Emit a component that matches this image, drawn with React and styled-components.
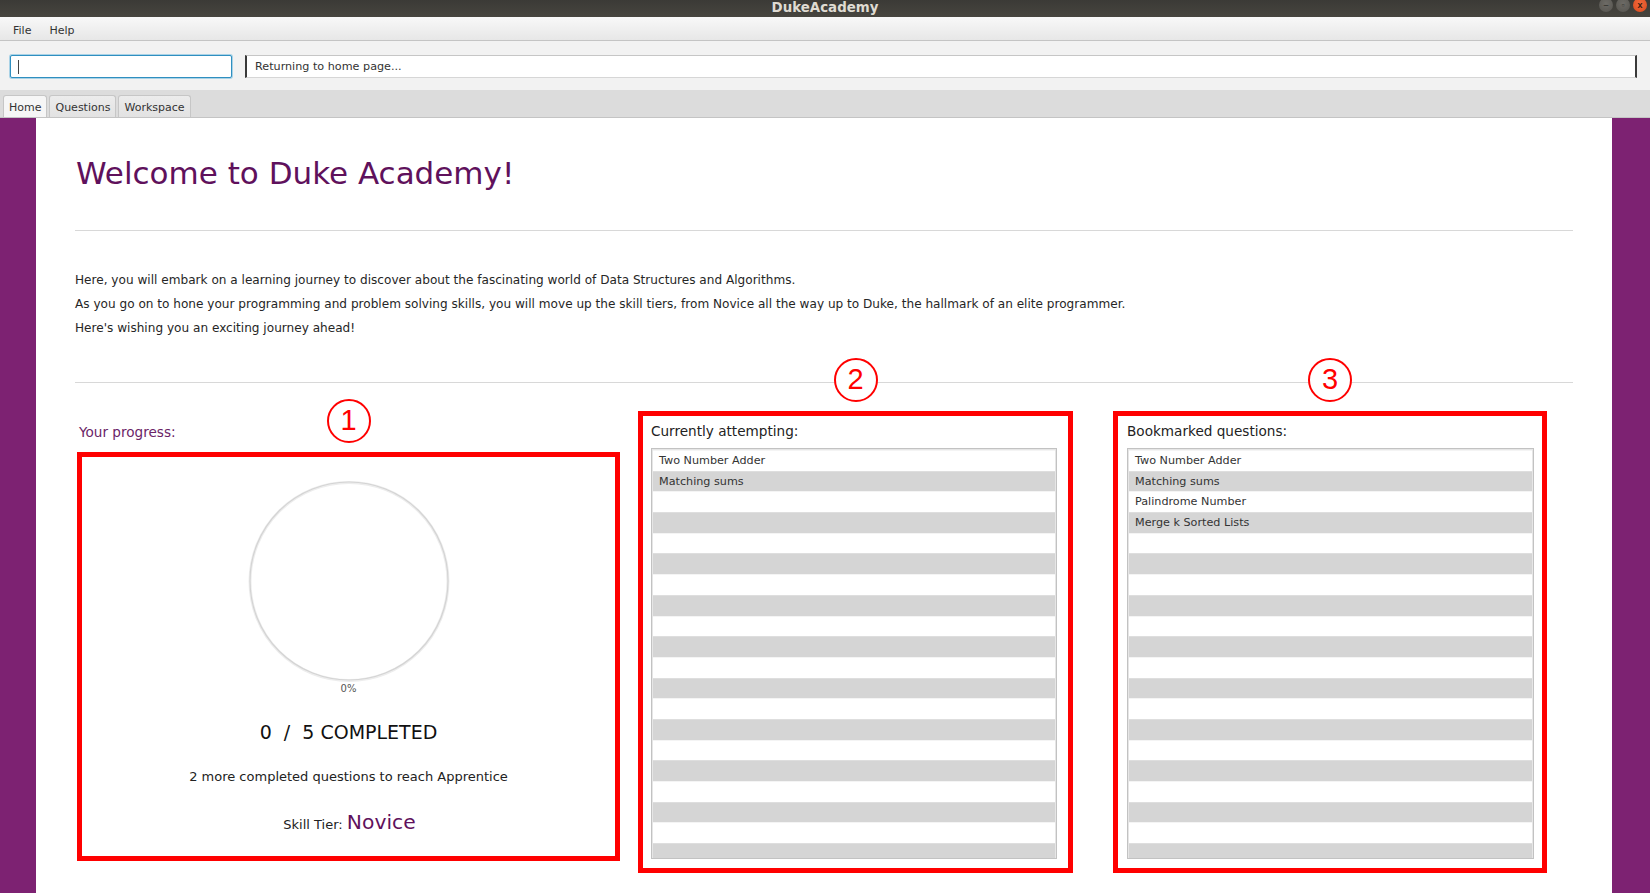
import styled, { createGlobalStyle } from "styled-components";

const GlobalStyle = createGlobalStyle`
  html, body {
    margin: 0;
    padding: 0;
    overflow: hidden;
    background: #ffffff;
  }
  body {
    font-family: "DejaVu Sans", "Liberation Sans", sans-serif;
    color: #333333;
  }
  * {
    box-sizing: border-box;
  }
`;

const PURPLE = "#7d2272";
const DARK_PURPLE = "#5f115c";

const Window = styled.div`
  width: 1650px;
  height: 893px;
  display: flex;
  flex-direction: column;
  overflow: hidden;
`;

const TitleBar = styled.div`
  height: 17px;
  flex: none;
  display: grid;
  grid-template-columns: 1fr auto 1fr;
  align-items: start;
  background: linear-gradient(#3b3a36, #47453f);
  overflow: hidden;
`;

const WindowTitle = styled.div`
  grid-column: 2;
  height: 17px;
  line-height: 15px;
  font-size: 13.4px;
  font-weight: bold;
  color: #dfdbd2;
`;

const WindowButtons = styled.div`
  grid-column: 3;
  justify-self: end;
  display: flex;
  gap: 3px;
  margin-top: -2px;
  padding-right: 3px;
`;

const WinButton = styled.div`
  width: 14px;
  height: 14px;
  border-radius: 50%;
  background: ${(p) => (p.$close ? "radial-gradient(circle at 50% 40%, #f26a3d, #d9481c)" : "radial-gradient(circle at 50% 40%, #6d6b66, #55534e)")};
  color: ${(p) => (p.$close ? "#3a1a0c" : "#3b3a36")};
  font-size: 9px;
  line-height: 14px;
  text-align: center;
  font-family: "Liberation Sans", sans-serif;
  font-weight: bold;
`;

const MenuBar = styled.div`
  height: 24px;
  flex: none;
  display: flex;
  align-items: center;
  padding: 3px 0 0 4px;
  background: linear-gradient(#f8f8f8, #e7e7e7);
  border-bottom: 1px solid #c4c4c4;
`;

const MenuItem = styled.span`
  padding: 0 9px;
  font-size: 11px;
  color: #333333;
`;

const Toolbar = styled.div`
  height: 49px;
  flex: none;
  display: flex;
  align-items: flex-start;
  gap: 13px;
  padding: 14px 13px 0 10px;
  background: #f2f2f2;
`;

const CommandInput = styled.div`
  width: 222px;
  height: 23px;
  flex: none;
  background: #ffffff;
  border: 1px solid #2f8fc0;
  box-shadow: 0 0 0 1px #a9d2e6;
  border-radius: 2px;
  display: flex;
  align-items: center;
  padding-left: 7px;
`;

const Caret = styled.span`
  width: 1px;
  height: 14px;
  background: #444444;
`;

const ResultField = styled.div`
  flex: 1;
  height: 23px;
  background: #ffffff;
  border-top: 1px solid #c6c6c6;
  border-bottom: 1px solid #d6d6d6;
  border-left: 2px solid #3a3a3a;
  border-right: 2px solid #3a3a3a;
  padding-left: 8px;
  font-size: 11.2px;
  line-height: 21px;
  color: #333333;
`;

const TabBar = styled.div`
  height: 28px;
  flex: none;
  display: flex;
  align-items: flex-end;
  gap: 2px;
  padding-left: 3px;
  background: #dcdcdc;
  border-bottom: 1px solid #c4c4c4;
`;

const Tab = styled.div`
  height: 22px;
  padding: 2px 5px 0 5px;
  font-size: 11px;
  line-height: 20px;
  color: #333333;
  border: 1px solid #c6c6c6;
  border-bottom: none;
  border-radius: 3px 3px 0 0;
  background: ${(p) => (p.$active ? "#f6f6f6" : "linear-gradient(#ececec, #e2e2e2)")};
`;

const Main = styled.div`
  flex: 1;
  display: flex;
  min-height: 0;
`;

const SideBand = styled.div`
  width: ${(p) => p.$width}px;
  flex: none;
  background: ${PURPLE};
`;

const Content = styled.div`
  flex: 1;
  background: #ffffff;
  padding: 35px 39px 0 39px;
  overflow: hidden;
`;

const Heading = styled.h1`
  margin: 0;
  padding-left: 1px;
  font-size: 31px;
  line-height: 40px;
  font-weight: normal;
  color: ${DARK_PURPLE};
`;

const Rule = styled.div`
  height: 1px;
  background: #d8d8d8;
  margin-top: ${(p) => p.$top}px;
`;

const Intro = styled.div`
  margin-top: 37px;
  font-size: 12.1px;
  line-height: 24px;
  color: #262626;
`;

const Panels = styled.div`
  display: flex;
  align-items: flex-start;
`;

const Column = styled.div`
  width: ${(p) => p.$width}px;
  margin-left: ${(p) => p.$left}px;
  margin-top: ${(p) => p.$top}px;
  flex: none;
  display: flex;
  flex-direction: column;
`;

const ProgressLabel = styled.div`
  font-size: 13.6px;
  line-height: 18px;
  color: #6b2467;
  padding-left: 2px;
  margin-bottom: 11px;
`;

const Annotated = styled.div`
  position: relative;
  border: 5px solid #ff0000;
  height: ${(p) => p.$height}px;
`;

const Marker = styled.div`
  position: absolute;
  left: 50%;
  top: -58px;
  transform: translateX(-50%);
  width: 44px;
  height: 44px;
  border-radius: 50%;
  border: 2.5px solid #ff0000;
  background: #ffffff;
  color: #ff0000;
  font-family: "Liberation Sans", Arial, sans-serif;
  font-size: 29px;
  line-height: 39px;
  text-align: center;
`;

const ProgressBody = styled.div`
  display: flex;
  flex-direction: column;
  align-items: center;
  padding-top: 22px;
`;

const Percent = styled.div`
  font-size: 10px;
  line-height: 12px;
  color: #555555;
`;

const Completed = styled.div`
  margin-top: 25px;
  font-size: 19px;
  line-height: 24px;
  color: #111111;
  white-space: pre;
`;

const NextTier = styled.div`
  margin-top: 25px;
  font-size: 13px;
  line-height: 16px;
  color: #222222;
`;

const TierLine = styled.div`
  margin-top: 24px;
  font-size: 13px;
  line-height: 26px;
  color: #222222;
  padding-left: 2px;
`;

const TierName = styled.span`
  font-size: 20.3px;
  color: ${DARK_PURPLE};
`;

const ListPanel = styled.div`
  display: flex;
  flex-direction: column;
  height: 100%;
  padding: 6px ${(p) => p.$right}px 8px ${(p) => p.$left}px;
`;

const ListTitle = styled.div`
  font-size: 13.6px;
  line-height: 18px;
  color: #222222;
  margin-bottom: 8px;
`;

const ListBox = styled.div`
  height: 411px;
  border: 1px solid #c2c2c2;
  padding: 1px 1px 0 1px;
  background: #e6e6e6;
  overflow: hidden;
`;

const Row = styled.div`
  height: 20.7px;
  padding-left: 6px;
  font-size: 11.2px;
  line-height: 19.7px;
  color: #333333;
  background: ${(p) => (p.$odd ? "#d5d5d5" : "#ffffff")};
  border-top: 1px solid ${(p) => (p.$odd ? "#dedede" : "#f4f4f4")};
`;

function ProgressRing() {
  return (
    <svg width="204" height="204" viewBox="0 0 204 204">
      <circle cx="102" cy="102.5" r="99" fill="none" stroke="#ededed" strokeWidth="3" />
      <circle cx="102" cy="102" r="99" fill="none" stroke="#d4d4d4" strokeWidth="1.2" />
    </svg>
  );
}

function QuestionList({ title, items, left, right }) {
  const rows = Array.from({ length: 20 }, (_, i) => items[i] || "");
  return (
    <ListPanel $left={left} $right={right}>
      <ListTitle>{title}</ListTitle>
      <ListBox>
        {rows.map((name, i) => (
          <Row key={i} $odd={i % 2 === 1}>
            {name}
          </Row>
        ))}
      </ListBox>
    </ListPanel>
  );
}

export default function App() {
  return (
    <>
      <GlobalStyle />
      <Window>
        <TitleBar>
          <WindowTitle>DukeAcademy</WindowTitle>
          <WindowButtons>
            <WinButton>–</WinButton>
            <WinButton>▫</WinButton>
            <WinButton $close>x</WinButton>
          </WindowButtons>
        </TitleBar>
        <MenuBar>
          <MenuItem>File</MenuItem>
          <MenuItem>Help</MenuItem>
        </MenuBar>
        <Toolbar>
          <CommandInput>
            <Caret />
          </CommandInput>
          <ResultField>Returning to home page...</ResultField>
        </Toolbar>
        <TabBar>
          <Tab $active>Home</Tab>
          <Tab>Questions</Tab>
          <Tab>Workspace</Tab>
        </TabBar>
        <Main>
          <SideBand $width={36} />
          <Content>
            <Heading>Welcome to Duke Academy!</Heading>
            <Rule $top={37} />
            <Intro>
              <div>Here, you will embark on a learning journey to discover about the fascinating world of Data Structures and Algorithms.</div>
              <div>As you go on to hone your programming and problem solving skills, you will move up the skill tiers, from Novice all the way up to Duke, the hallmark of an elite programmer.</div>
              <div>Here's wishing you an exciting journey ahead!</div>
            </Intro>
            <Rule $top={42} />
            <Panels>
              <Column $width={543} $left={2} $top={40}>
                <ProgressLabel>Your progress:</ProgressLabel>
                <Annotated $height={409}>
                  <Marker>1</Marker>
                  <ProgressBody>
                    <ProgressRing />
                    <Percent>0%</Percent>
                    <Completed>{"0  /  5 COMPLETED"}</Completed>
                    <NextTier>2 more completed questions to reach Apprentice</NextTier>
                    <TierLine>
                      Skill Tier: <TierName>Novice</TierName>
                    </TierLine>
                  </ProgressBody>
                </Annotated>
              </Column>
              <Column $width={435} $left={18} $top={28}>
                <Annotated $height={462}>
                  <Marker>2</Marker>
                  <QuestionList
                    title="Currently attempting:"
                    items={["Two Number Adder", "Matching sums"]}
                    left={8}
                    right={11}
                  />
                </Annotated>
              </Column>
              <Column $width={434} $left={40} $top={28}>
                <Annotated $height={462}>
                  <Marker>3</Marker>
                  <QuestionList
                    title="Bookmarked questions:"
                    items={["Two Number Adder", "Matching sums", "Palindrome Number", "Merge k Sorted Lists"]}
                    left={9}
                    right={8}
                  />
                </Annotated>
              </Column>
            </Panels>
          </Content>
          <SideBand $width={38} />
        </Main>
      </Window>
    </>
  );
}
